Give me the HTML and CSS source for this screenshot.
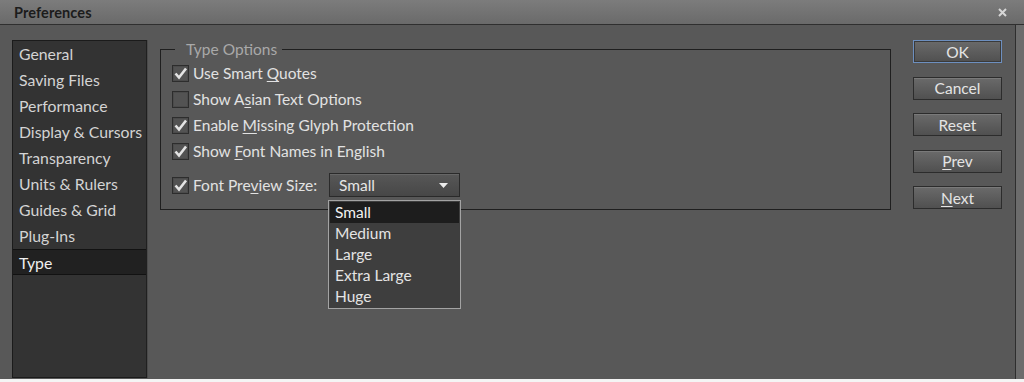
FILE: index.html
```html
<!DOCTYPE html>
<html>
<head>
<meta charset="utf-8">
<title>Preferences</title>
<link rel="stylesheet" href="styles.css">
</head>
<body>
<div class="window">
  <div class="titlebar">
    <span class="title">Preferences</span>
    <svg class="close" width="9" height="9" viewBox="0 0 9 9"><path d="M1 1 L8 8 M8 1 L1 8" stroke="#d6d6d6" stroke-width="2"/></svg>
  </div>
  <div class="frame">
    <div class="content">
      <ul class="nav">
        <li>General</li>
        <li>Saving Files</li>
        <li>Performance</li>
        <li>Display &amp; Cursors</li>
        <li>Transparency</li>
        <li>Units &amp; Rulers</li>
        <li>Guides &amp; Grid</li>
        <li>Plug-Ins</li>
        <li class="selected">Type</li>
      </ul>
      <fieldset class="group">
        <legend>Type Options</legend>
        <div class="row">
          <span class="box checked"><svg width="15" height="15" viewBox="0 0 15 15"><path d="M2.5 7.5 L6 11.5 L13 2.5" fill="none" stroke="#e4e4e4" stroke-width="2.6"/></svg></span>
          <span class="label">Use Smart <u>Q</u>uotes</span>
        </div>
        <div class="row">
          <span class="box"></span>
          <span class="label">Show A<u>s</u>ian Text Options</span>
        </div>
        <div class="row">
          <span class="box checked"><svg width="15" height="15" viewBox="0 0 15 15"><path d="M2.5 7.5 L6 11.5 L13 2.5" fill="none" stroke="#e4e4e4" stroke-width="2.6"/></svg></span>
          <span class="label">Enable <u>M</u>issing Glyph Protection</span>
        </div>
        <div class="row">
          <span class="box checked"><svg width="15" height="15" viewBox="0 0 15 15"><path d="M2.5 7.5 L6 11.5 L13 2.5" fill="none" stroke="#e4e4e4" stroke-width="2.6"/></svg></span>
          <span class="label">Show <u>F</u>ont Names in English</span>
        </div>
        <div class="row row-select">
          <span class="box checked"><svg width="15" height="15" viewBox="0 0 15 15"><path d="M2.5 7.5 L6 11.5 L13 2.5" fill="none" stroke="#e4e4e4" stroke-width="2.6"/></svg></span>
          <span class="label label-fixed">Font Pre<u>v</u>iew Size:</span>
          <div class="select">
            <span>Small</span>
            <svg class="arrow" width="9" height="5" viewBox="0 0 9 5"><path d="M0 0 H9 L4.5 5 Z" fill="#ececec"/></svg>
            <ul class="menu">
              <li class="active">Small</li>
              <li>Medium</li>
              <li>Large</li>
              <li>Extra Large</li>
              <li>Huge</li>
            </ul>
          </div>
        </div>
      </fieldset>
      <div class="buttons">
        <button class="btn default">OK</button>
        <button class="btn">Cancel</button>
        <button class="btn">Reset</button>
        <button class="btn"><u>P</u>rev</button>
        <button class="btn"><u>N</u>ext</button>
      </div>
    </div>
  </div>
  <div class="bottom"></div>
</div>
</body>
</html>
```
FILE: styles.css
```css
* { box-sizing: border-box; }
html, body { margin: 0; padding: 0; }
body {
  width: 1024px;
  height: 382px;
  overflow: hidden;
  background: #ffffff;
  font-family: Lato, "Liberation Sans", sans-serif;
}
.window { width: 1024px; height: 382px; display: flex; flex-direction: column; }
.titlebar {
  height: 25px;
  flex: none;
  background: linear-gradient(#7c7c7c, #6a6a6a);
  border-bottom: 1px solid #2f2f2f;
  display: flex;
  align-items: center;
  justify-content: space-between;
  padding: 0 17px 0 14px;
}
.title { font-size: 14.5px; font-weight: 700; color: #1c1c1c; letter-spacing: 0.1px; }
.close { display: block; }
.frame {
  height: 354px;
  flex: none;
  background: #6c6c6c;
}
.content {
  width: 1016px;
  height: 354px;
  background: #585858;
  border-right: 1px solid #2e2e2e;
  display: flex;
  align-items: flex-start;
  padding: 15px 0 0 12px;
}
.bottom { height: 3px; background: #f4f4f4; flex: none; }

.nav {
  list-style: none;
  margin: 0;
  padding: 0;
  width: 135px;
  height: 338px;
  background: #333333;
  border: 1px solid #1b1b1b;
  border-right-color: #202020;
  box-shadow: 1px 0 0 #4a4a4a;
  flex: none;
}
.nav li {
  height: 26px;
  line-height: 26px;
  padding-left: 6px;
  font-size: 15.8px;
  color: #d4d4d4;
  white-space: nowrap;
}
.nav li.selected {
  background: #212121;
  border-top: 1px solid #121212;
  border-bottom: 1px solid #121212;
  line-height: 25px;
  color: #f0f0f0;
}

.group {
  margin: 0 0 0 13px;
  width: 731px;
  flex: none;
  border: 1px solid #1f1f1f;
  padding: 2px 0 12px 11px;
  min-width: 0;
}
.group legend {
  margin-left: 3px;
  padding: 0 5px 0 11px;
  font-size: 15.5px;
  line-height: 18px;
  color: #a9a9a9;
}
.row {
  height: 26px;
  display: flex;
  align-items: center;
}
.row-select { height: 24px; margin-top: 9px; }
.box {
  width: 17px;
  height: 17px;
  flex: none;
  border: 1px solid #2d2d2d;
  background: #535353;
  box-shadow: inset 0 0 0 1px #4b4b4b;
  display: flex;
  align-items: center;
  justify-content: center;
}
.label {
  margin-left: 4px;
  font-size: 15.5px;
  color: #e2e2e2;
  white-space: nowrap;
}
.label u, .btn u { text-underline-offset: 2px; }
.label-fixed { width: 136px; flex: none; }

.select {
  position: relative;
  width: 131px;
  height: 24px;
  border: 1px solid #2a2a2a;
  background: linear-gradient(#575757, #474747);
  box-shadow: inset 0 1px 0 #666;
  display: flex;
  align-items: center;
  justify-content: space-between;
  padding: 0 11px 0 9px;
  font-size: 15.5px;
  color: #e6e6e6;
}
.arrow { display: block; }
.menu {
  position: absolute;
  top: 26px;
  left: -2px;
  width: 133px;
  margin: 0;
  padding: 1px;
  list-style: none;
  background: #3e3e3e;
  border: 1px solid #a3a3a3;
}
.menu li {
  height: 21px;
  line-height: 21px;
  padding-left: 5px;
  font-size: 15.5px;
  color: #e4e4e4;
}
.menu li.active { background: #1d1d1d; color: #f2f2f2; }

.buttons {
  margin-left: 22px;
  width: 89px;
  flex: none;
  display: flex;
  flex-direction: column;
  gap: 13.5px;
}
.btn {
  height: 23px;
  padding: 0;
  border: 1px solid #2c2c2c;
  background: linear-gradient(#6a6a6a, #505050);
  box-shadow: inset 0 1px 0 #7a7a7a;
  font-family: Lato, "Liberation Sans", sans-serif;
  font-size: 15.5px;
  color: #e4e4e4;
  text-align: center;
}
.btn.default {
  border-color: #6d8fbf;
  box-shadow: inset 0 0 0 1px #3a3a3a;
}
```
